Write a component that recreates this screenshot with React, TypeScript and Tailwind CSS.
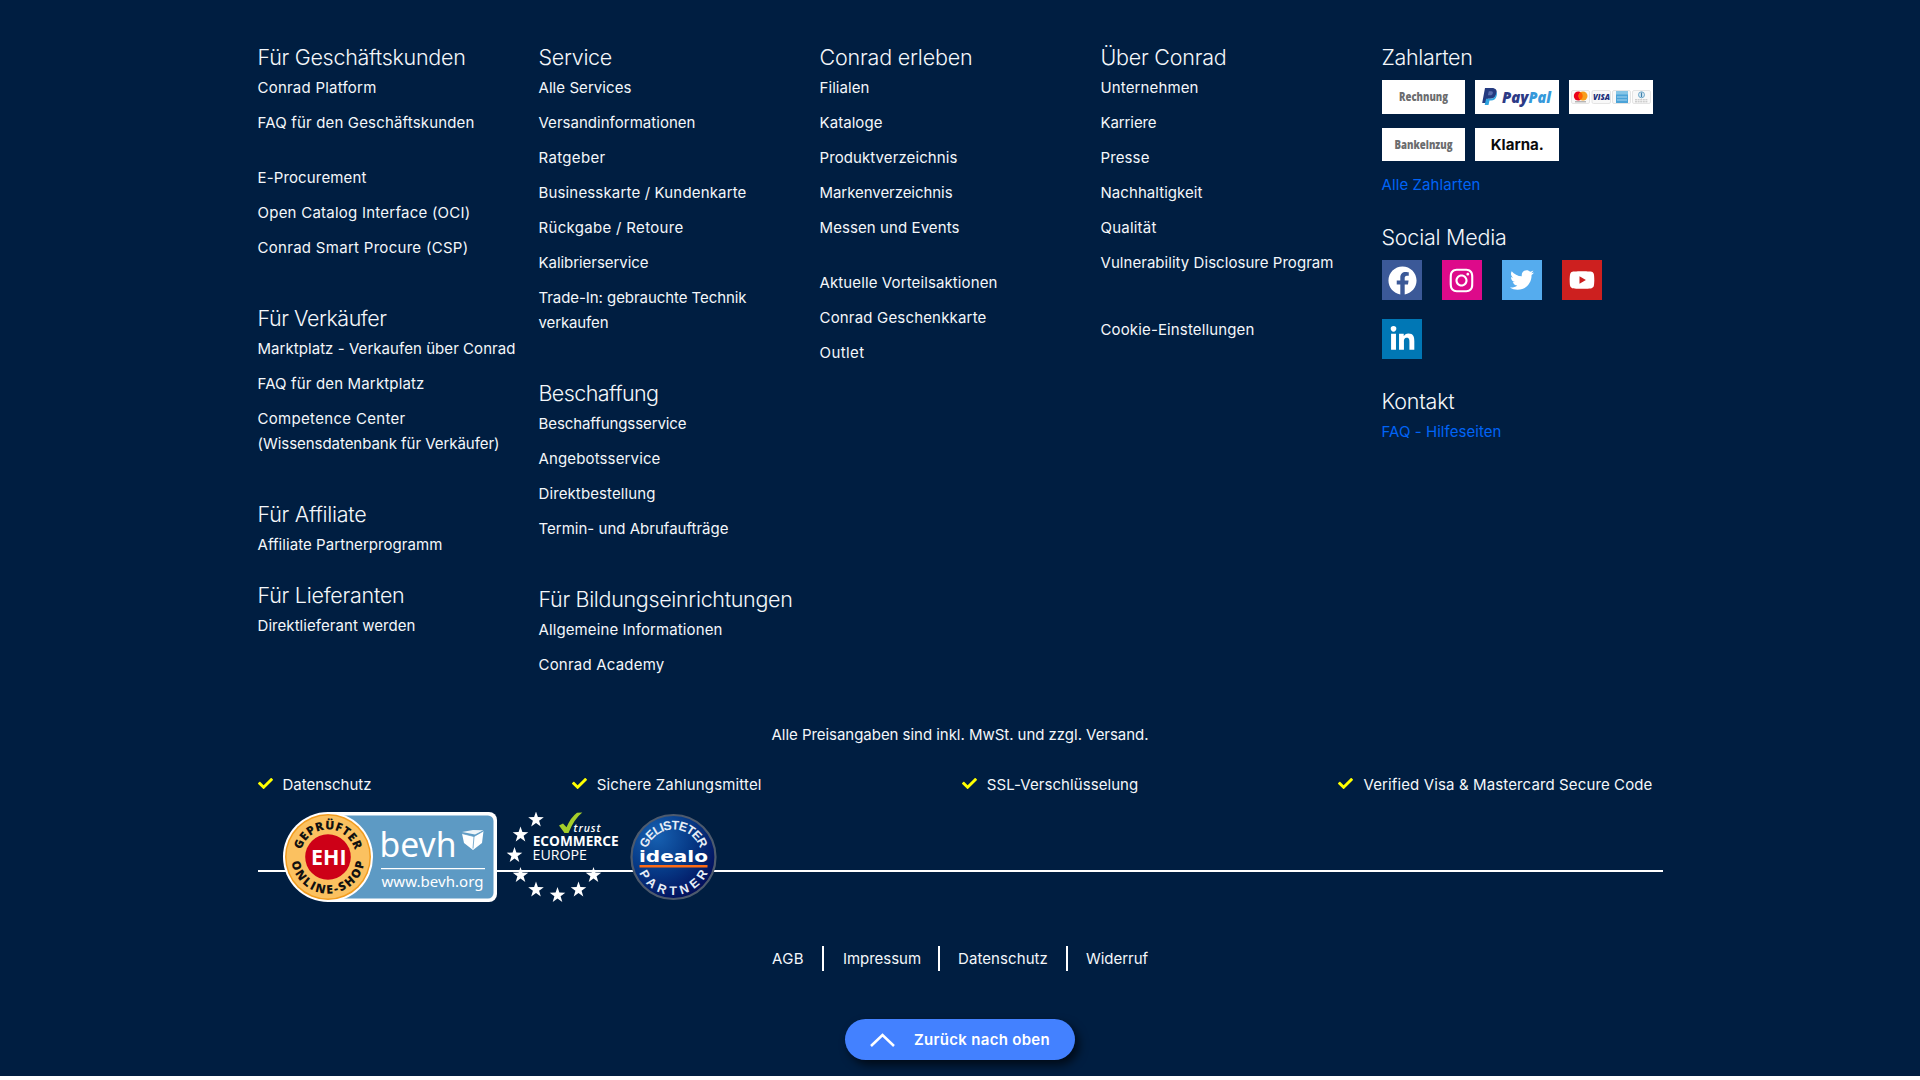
import { useLayoutEffect, useRef } from "react";
import type { ReactNode } from "react";
import { FaFacebook, FaInstagram, FaTwitter, FaYoutube, FaLinkedinIn, FaCheck } from "react-icons/fa";

type Line = [text: string, width: number];

/** Spreads a line of text over a given width by adjusting its tracking. */
function Fit({ line, className = "" }: { line: Line; className?: string }) {
  const ref = useRef<HTMLSpanElement>(null);
  const [text, width] = line;
  useLayoutEffect(() => {
    const el = ref.current;
    if (!el) return;
    el.style.letterSpacing = "0px";
    const natural = el.getBoundingClientRect().width;
    el.style.letterSpacing = `${(width + 1 - natural) / text.length}px`;
  }, [text, width]);
  return (
    <span ref={ref} className={`inline-block whitespace-nowrap ${className}`}>
      {text}
    </span>
  );
}

function Heading({ line }: { line: Line }) {
  return (
    <h3 className="mb-[3px] h-[30px] text-[21.5px] leading-[30px] font-light">
      <Fit line={line} />
    </h3>
  );
}

function Links({ items, className = "" }: { items: Line[][]; className?: string }) {
  return (
    <ul className={`flex flex-col gap-[10px] ${className}`}>
      {items.map((lines) => (
        <li key={lines[0][0]}>
          <a className="flex flex-col items-start">
            {lines.map((l) => (
              <Fit key={l[0]} line={l} />
            ))}
          </a>
        </li>
      ))}
    </ul>
  );
}

function PayCard({ children, className }: { children: ReactNode; className: string }) {
  return <div className={`flex items-center justify-center bg-white ${className}`}>{children}</div>;
}

function PaymentMethods() {
  return (
    <div className="grid grid-cols-[83px_84px_84px] gap-x-[10px] gap-y-[14px] pt-[5px]">
      <PayCard className="h-[34px]">
        <svg width="83" height="34" viewBox="0 0 83 34">
          <text x="17" y="21.300" fontFamily="Open Sans" fontSize="12" fontWeight="800" fill="#6b6c6e" textLength="49" lengthAdjust="spacingAndGlyphs">Rechnung</text>
        </svg>
      </PayCard>
      <PayCard className="h-[34px]">
        <svg width="84" height="34" viewBox="0 0 84 34">
          <path d="M10 8h6.800c4 0 5.600 2.300 4.700 5.800-.8 3.500-3.200 5-6.400 5h-2.200L11.800 23H7.200z" fill="#253b80" />
          <path d="M21 12c1 1 1 2.400.6 4-.8 3.300-2.800 4.400-5.600 4.400h-1.500L13.500 25H9.700l1.400-6.200h4c3 0 5.200-1.500 5.900-4.800z" fill="#2fa4e0" />
          <path d="M13.800 11.300h2.400c1.400 0 1.900.8 1.600 2-.3 1.400-1.200 2-2.600 2h-2.300z" fill="#5b6fae" />
          <text y="22.500" fontFamily="Open Sans" fontSize="15" fontWeight="800" fontStyle="italic">
            <tspan x="27" fill="#2c3a86" textLength="26.500" lengthAdjust="spacingAndGlyphs">Pay</tspan>
            <tspan x="53.500" fill="#3599db" textLength="22.500" lengthAdjust="spacingAndGlyphs">Pal</tspan>
          </text>
        </svg>
      </PayCard>
      <PayCard className="h-[34px]">
        <svg width="84" height="34" viewBox="0 0 84 34">
          <g fill="#f8f8f8" stroke="#dedede" strokeWidth=".8">
            <rect x="2.500" y="10.500" width="18" height="13" rx="1.500" />
            <rect x="23" y="10.500" width="18.500" height="13" rx="1.500" />
            <rect x="43.500" y="10.500" width="18" height="13" rx="1.500" />
            <rect x="63.500" y="10.500" width="18" height="13" rx="1.500" />
          </g>
          <circle cx="9.300" cy="16" r="4.500" fill="#eb001b" />
          <circle cx="14" cy="16" r="4.500" fill="#f79e1b" />
          <path d="M11.650 12.200a4.500 4.500 0 0 1 0 7.600 4.500 4.500 0 0 1 0-7.600z" fill="#ff5f00" />
          <rect x="6" y="21.300" width="11" height="1" fill="#999" />
          <text x="24" y="20" fontFamily="Open Sans" fontSize="8.500" fontWeight="800" fontStyle="italic" fill="#1a2f7c" textLength="17" lengthAdjust="spacingAndGlyphs">VISA</text>
          <rect x="47" y="11" width="12" height="12" fill="#4ba3d8" />
          <path d="M47 11h12v3.500H47z" fill="#86c5e6" />
          <path d="M48 17h10M48 20h10" stroke="#a9d5ef" strokeWidth="1" />
          <circle cx="72.500" cy="14.800" r="3" fill="#d9eaf5" stroke="#6fa8c9" />
          <path d="M72.500 12.500v4.600" stroke="#3c7fa9" strokeWidth="1.200" />
          <path d="M66 19.800h13M66 21.800h13" stroke="#bcbcbc" strokeWidth="1" strokeDasharray="2 .6" />
        </svg>
      </PayCard>
      <PayCard className="h-[33px]">
        <svg width="83" height="33" viewBox="0 0 83 33">
          <text x="12.500" y="20.700" fontFamily="Open Sans" fontSize="12" fontWeight="800" fill="#6b6c6e" textLength="58" lengthAdjust="spacingAndGlyphs">Bankeinzug</text>
        </svg>
      </PayCard>
      <PayCard className="h-[33px]">
        <svg width="84" height="33" viewBox="0 0 84 33">
          <text x="15.800" y="22.300" fontFamily="Inter" fontSize="15" fontWeight="700" fill="#0b0b0b" textLength="53" lengthAdjust="spacingAndGlyphs">Klarna.</text>
        </svg>
      </PayCard>
    </div>
  );
}

function SocialMedia() {
  const box = "flex size-10 items-center justify-center";
  return (
    <div className="flex w-[240px] flex-wrap gap-x-5 gap-y-[19px] pt-[5px] text-white">
      <a className={`${box} bg-[#3b5998] pl-px`}><FaFacebook size={29} /></a>
      <a className={`${box} bg-[#dd0a8a]`}><FaInstagram size={27} /></a>
      <a className={`${box} bg-[#55acee]`}><FaTwitter size={24} /></a>
      <a className={`${box} bg-[#cd201f] pl-px`}><FaYoutube size={26} /></a>
      <a className={`${box} bg-[#0077b5] pl-px`}><FaLinkedinIn size={27} /></a>
    </div>
  );
}

function BevhBadge() {
  return (
    <svg className="ml-[25px]" width="214" height="90" viewBox="0 0 214 90">
      <defs>
        <path id="ehi-top" d="M17.500 45a27.500 27.500 0 0 1 55 0" />
        <path id="ehi-bottom" d="M8.300 45a36.700 36.700 0 0 0 73.400 0" />
      </defs>
      <path d="M45 0H206a8 8 0 0 1 8 8V82a8 8 0 0 1-8 8H45z" fill="#fff" />
      <path d="M45 3.500H205a5.500 5.500 0 0 1 5.500 5.500V81a5.500 5.500 0 0 1-5.500 5.500H45z" fill="#5d9ac4" />
      <circle cx="45" cy="45" r="45" fill="#fff" />
      <circle cx="45" cy="45" r="43" fill="#f29d20" />
      <circle cx="45" cy="45" r="41.500" fill="#fbc160" />
      <circle cx="45" cy="45" r="22.800" fill="#cd0017" />
      <text x="28" y="53" fontFamily="Open Sans" fontSize="21" fontWeight="700" fill="#fff" textLength="35.500" lengthAdjust="spacingAndGlyphs">EHI</text>
      <g fontFamily="Open Sans" fontSize="12" fontWeight="800" fill="#111" textAnchor="middle">
        <text><textPath href="#ehi-top" startOffset="50%" textLength="72">GEPRÜFTER</textPath></text>
        <text><textPath href="#ehi-bottom" startOffset="50%" textLength="105">ONLINE-SHOP</textPath></text>
      </g>
      <text x="96.500" y="45.300" fontFamily="Noto Sans" fontSize="34" fill="#fff" textLength="77" lengthAdjust="spacingAndGlyphs">bevh</text>
      <path d="M179 20l11-2 10.500.3-8.500 4.200z" fill="#fff" opacity=".9" />
      <path d="M179 21.500l12 3 9.500-5.500-1.500 12-9 7-9-7z" fill="#fff" />
      <path d="M179 21.500l12 3 9.500-5.500M191 24.500l-1 12" stroke="#5d9ac4" strokeWidth=".8" fill="none" />
      <path d="M98 56.700H202" stroke="#fff" strokeWidth="1.300" />
      <text x="98.500" y="75" fontFamily="Noto Sans" fontSize="15" fill="#fff" textLength="102" lengthAdjust="spacing">www.bevh.org</text>
    </svg>
  );
}

const stars = [[39, 7.500], [23.500, 22.500], [17.500, 43], [23.500, 63], [39, 77.500], [60.500, 83], [81.500, 77.500], [96.500, 63]];

function TrustBadge() {
  return (
    <svg width="126" height="90" viewBox="0 0 126 90">
      {stars.map(([x, y]) => (
        <path
          key={`${x}-${y}`}
          transform={`translate(${x} ${y})`}
          d="M0-8L1.900-2.500 7.800-2.300 3.100 1.200 4.800 6.900 0 3.500-4.800 6.900-3.100 1.200-7.800-2.300-1.900-2.500z"
          fill="#fff"
        />
      ))}
      <path d="M62 13.500l4-2 3.500 3.700Q74 5 80 .7l5.300-.2Q77 7 71.500 21H67.500z" fill="#a5ce2a" />
      <g fontFamily="Open Sans" fill="#fff">
        <text x="76.500" y="20" fontSize="10.500" fontWeight="600" fontStyle="italic" textLength="27">trust</text>
        <text x="35.700" y="33.800" fontSize="14.200" fontWeight="700" textLength="86" lengthAdjust="spacingAndGlyphs">ECOMMERCE</text>
        <text x="35.500" y="48" fontSize="14.200" textLength="54.500" lengthAdjust="spacingAndGlyphs">EUROPE</text>
      </g>
    </svg>
  );
}

function IdealoBadge() {
  return (
    <svg className="ml-[7px]" width="88" height="90" viewBox="0 0 88 90">
      <defs>
        <radialGradient id="idealo-bg" cx=".3" cy=".25" r=".85">
          <stop offset="0" stopColor="#1761b2" />
          <stop offset=".5" stopColor="#063986" />
          <stop offset="1" stopColor="#020a55" />
        </radialGradient>
        <path id="idealo-top" d="M15.500 45.500a28 28 0 0 1 56 0" />
        <path id="idealo-bottom" d="M6 45.500a37.500 37.500 0 0 0 75 0" />
      </defs>
      <circle cx="43.500" cy="45" r="42" fill="url(#idealo-bg)" stroke="#4d5a6d" strokeWidth="2.200" />
      <g fontFamily="Liberation Sans" fontSize="12.500" fontWeight="700" fill="#e6edf6" textAnchor="middle">
        <text><textPath href="#idealo-top" startOffset="50%" textLength="70">GELISTETER</textPath></text>
        <text><textPath href="#idealo-bottom" startOffset="50%" textLength="86">PARTNER</textPath></text>
      </g>
      <text x="9" y="50" fontFamily="DejaVu Sans" fontSize="16.500" fontWeight="700" fill="#fff" textLength="69" lengthAdjust="spacingAndGlyphs">idealo</text>
      <rect x="9.500" y="53" width="68" height="2.500" fill="#ff6a13" />
    </svg>
  );
}

function Check({ line }: { line: Line }) {
  return (
    <li className="flex items-center">
      <FaCheck size={15} className="mr-[10px] -mt-0.5 shrink-0 text-[#ffff00]" />
      <Fit line={line} />
    </li>
  );
}

export default function App() {
  return (
    <div className="h-[1080px] w-full overflow-hidden bg-white">
      <footer className="flex h-[1076px] w-full flex-col items-center bg-[#001e41] font-['Inter',sans-serif] text-[15px] leading-[25px] text-[#f4f7fa]">
        <div className="w-[1405px] pt-[42px]">
          <div className="grid h-[680px] grid-cols-5 content-start">
            <div>
              <Heading line={["Für Geschäftskunden", 207]} />
              <Links items={[[["Conrad Platform", 118]], [["FAQ für den Geschäftskunden", 216]]]} className="mb-[30px]" />
              <Links
                items={[[["E-Procurement", 108]], [["Open Catalog Interface (OCI)", 212]], [["Conrad Smart Procure (CSP)", 210]]]}
                className="mb-[43px]"
              />
              <Heading line={["Für Verkäufer", 128]} />
              <Links
                items={[
                  [["Marktplatz - Verkaufen über Conrad", 257]],
                  [["FAQ für den Marktplatz", 166]],
                  [["Competence Center", 147], ["(Wissensdatenbank für Verkäufer)", 241]],
                ]}
                className="mb-[43px]"
              />
              <Heading line={["Für Affiliate", 108]} />
              <Links items={[[["Affiliate Partnerprogramm", 184]]]} className="mb-[23px]" />
              <Heading line={["Für Lieferanten", 146]} />
              <Links items={[[["Direktlieferant werden", 157]]]} />
            </div>
            <div>
              <Heading line={["Service", 72.5]} />
              <Links
                items={[
                  [["Alle Services", 92]],
                  [["Versandinformationen", 156]],
                  [["Ratgeber", 66]],
                  [["Businesskarte / Kundenkarte", 207]],
                  [["Rückgabe / Retoure", 144]],
                  [["Kalibrierservice", 109]],
                  [["Trade-In: gebrauchte Technik", 207], ["verkaufen", 69]],
                ]}
                className="mb-[43px]"
              />
              <Heading line={["Beschaffung", 119]} />
              <Links
                items={[[["Beschaffungsservice", 147]], [["Angebotsservice", 121]], [["Direktbestellung", 116]], [["Termin- und Abrufaufträge", 189]]]}
                className="mb-[43px]"
              />
              <Heading line={["Für Bildungseinrichtungen", 253]} />
              <Links items={[[["Allgemeine Informationen", 183]], [["Conrad Academy", 125]]]} />
            </div>
            <div>
              <Heading line={["Conrad erleben", 152]} />
              <Links
                items={[[["Filialen", 49]], [["Kataloge", 62]], [["Produktverzeichnis", 137]], [["Markenverzeichnis", 132]], [["Messen und Events", 139]]]}
                className="mb-[30px]"
              />
              <Links items={[[["Aktuelle Vorteilsaktionen", 177]], [["Conrad Geschenkkarte", 166]], [["Outlet", 44]]]} />
            </div>
            <div>
              <Heading line={["Über Conrad", 125]} />
              <Links
                items={[
                  [["Unternehmen", 97]],
                  [["Karriere", 55]],
                  [["Presse", 48]],
                  [["Nachhaltigkeit", 101]],
                  [["Qualität", 55]],
                  [["Vulnerability Disclosure Program", 232]],
                ]}
                className="mb-[42px]"
              />
              <Links items={[[["Cookie-Einstellungen", 153]]]} />
            </div>
            <div className="text-[#0064f6]">
              <div className="text-[#f4f7fa]"><Heading line={["Zahlarten", 90]} /></div>
              <PaymentMethods />
              <Links items={[[["Alle Zahlarten", 98]]]} className="mt-[11px] mb-[25px]" />
              <div className="text-[#f4f7fa]"><Heading line={["Social Media", 124]} /></div>
              <SocialMedia />
              <div className="mt-[27px] text-[#f4f7fa]"><Heading line={["Kontakt", 72]} /></div>
              <Links items={[[["FAQ - Hilfeseiten", 119]]]} />
            </div>
          </div>

          <p className="text-center"><Fit line={["Alle Preisangaben sind inkl. MwSt. und zzgl. Versand.", 376]} /></p>

          <ul className="mt-[25px] flex justify-between pr-[10px]">
            <Check line={["Datenschutz", 88]} />
            <Check line={["Sichere Zahlungsmittel", 164]} />
            <Check line={["SSL-Verschlüsselung", 150]} />
            <Check line={["Verified Visa & Mastercard Secure Code", 288]} />
          </ul>

          <div className="mt-[15px] flex h-[90px] bg-[linear-gradient(#fff,#fff)] bg-[length:100%_2px] bg-[position:0_58px] bg-no-repeat">
            <BevhBadge />
            <TrustBadge />
            <IdealoBadge />
          </div>
        </div>

        <nav className="mt-[44px] flex h-[25px] divide-x-2 divide-white">
          <a className="pr-[18px]"><Fit line={["AGB", 31]} /></a>
          <a className="pr-[17px] pl-[19px]"><Fit line={["Impressum", 77]} /></a>
          <a className="px-[18px]"><Fit line={["Datenschutz", 89]} /></a>
          <a className="pl-[18px]"><Fit line={["Widerruf", 61]} /></a>
        </nav>

        <button className="mt-12 flex h-[41px] w-[230px] items-center rounded-full bg-[#4381ff] pl-[25px] font-semibold text-white shadow-[4px_5px_10px_rgba(0,0,0,0.65)]">
          <svg width="25" height="14" viewBox="0 0 25 14" fill="none">
            <path d="M1 13L12.500 2 24 13" stroke="#fff" strokeWidth="2.500" />
          </svg>
          <Fit line={["Zurück nach oben", 135]} className="ml-[19px]" />
        </button>
      </footer>
    </div>
  );
}
